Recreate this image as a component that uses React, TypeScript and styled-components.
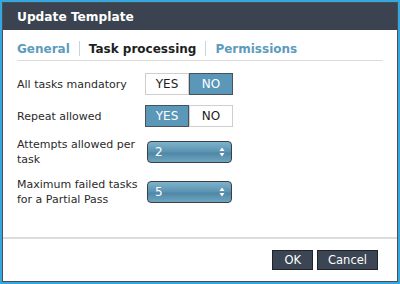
import styled, { createGlobalStyle } from 'styled-components';

const Global = createGlobalStyle`
    html, body { margin: 0; padding: 0; background: #fff; }
    body { font-family: "DejaVu Sans", "Liberation Sans", sans-serif; }
`;

const Frame = styled.div`
    box-sizing: border-box;
    width: 400px;
    height: 284px;
    border: 2px solid #35a7dc;
    background: #fff;
`;

const Dialog = styled.div`
    box-sizing: border-box;
    height: 100%;
    border: 1px solid #4a4f57;
    display: flex;
    flex-direction: column;
`;

const TitleBar = styled.div`
    height: 27px;
    background: #3b4350;
    color: #fff;
    font-weight: bold;
    font-size: 12.2px;
    display: flex;
    align-items: center;
    padding-left: 14px;
`;

const Body = styled.div`
    flex: 1;
    padding: 0 14px;
`;

const TabRow = styled.div`
    box-sizing: border-box;
    display: flex;
    align-items: center;
    height: 30px;
    margin-top: 1px;
    padding-top: 6px;
    border-bottom: 1px solid #dcdcdc;
    font-size: 12px;
    font-weight: bold;
`;

const TabLink = styled.span<{ $active?: boolean }>`
    color: ${p => (p.$active ? '#1d1f22' : '#5c9cbd')};
`;

const Sep = styled.span`
    width: 1px;
    height: 15px;
    background: #c9d4da;
    margin: 0 9px;
`;

const Form = styled.div`
    display: grid;
    grid-template-columns: 128px auto;
    align-items: center;
    row-gap: 10px;
    padding-top: 12px;
`;

const Label = styled.div`
    font-size: 11px;
    color: #2a2a2a;
    line-height: 15px;
`;

const Toggle = styled.div`
    display: flex;
    width: 88px;
    height: 22px;
`;

const ToggleBtn = styled.div<{ $on?: boolean }>`
    box-sizing: border-box;
    flex: 1;
    display: flex;
    align-items: center;
    justify-content: center;
    font-size: 12px;
    color: ${p => (p.$on ? '#fff' : '#1d1d1d')};
    background: ${p => (p.$on ? '#5b97b8' : '#fff')};
    border: 1px solid ${p => (p.$on ? '#47525c' : '#cfcfcf')};
`;

const Select = styled.div`
    box-sizing: border-box;
    width: 85px;
    height: 22px;
    margin-left: 2px;
    border: 1px solid #3b3f44;
    border-radius: 4px;
    background: linear-gradient(#7fb3cc, #5a92b0 50%, #4e87a6 55%, #6ea5c0);
    color: #fff;
    font-size: 12px;
    display: flex;
    align-items: center;
    justify-content: space-between;
    padding: 0 6px 0 7px;
`;

const Footer = styled.div`
    border-top: 2px solid #dcdcdc;
    height: 42px;
    display: flex;
    align-items: center;
    justify-content: flex-end;
    gap: 4px;
    padding-right: 19px;
`;

const Button = styled.div<{ $pad?: number }>`
    box-sizing: border-box;
    height: 20px;
    padding: 0 ${p => p.$pad ?? 10}px;
    background: #3b4553;
    border: 1px solid #1f242b;
    color: #fff;
    font-size: 11.5px;
    display: flex;
    align-items: center;
    justify-content: center;
`;

function Arrows() {
    return (
        <svg width="6" height="10" viewBox="0 0 6 10">
            <path d="M3 0.5 L5.5 4 H0.5 Z" fill="#fff" />
            <path d="M3 9.5 L5.5 6 H0.5 Z" fill="#fff" />
        </svg>
    );
}

export default function App() {
    return (
        <Frame>
            <Global />
            <Dialog>
                <TitleBar>Update Template</TitleBar>
                <Body>
                    <TabRow>
                        <TabLink>General</TabLink>
                        <Sep />
                        <TabLink $active>Task processing</TabLink>
                        <Sep />
                        <TabLink>Permissions</TabLink>
                    </TabRow>
                    <Form>
                        <Label>All tasks mandatory</Label>
                        <Toggle>
                            <ToggleBtn>YES</ToggleBtn>
                            <ToggleBtn $on>NO</ToggleBtn>
                        </Toggle>
                        <Label>Repeat allowed</Label>
                        <Toggle>
                            <ToggleBtn $on>YES</ToggleBtn>
                            <ToggleBtn>NO</ToggleBtn>
                        </Toggle>
                        <Label>Attempts allowed per<br />task</Label>
                        <Select><span>2</span><Arrows /></Select>
                        <Label>Maximum failed tasks<br />for a Partial Pass</Label>
                        <Select><span>5</span><Arrows /></Select>
                    </Form>
                </Body>
                <Footer>
                    <Button $pad={11}>OK</Button>
                    <Button>Cancel</Button>
                </Footer>
            </Dialog>
        </Frame>
    );
}
